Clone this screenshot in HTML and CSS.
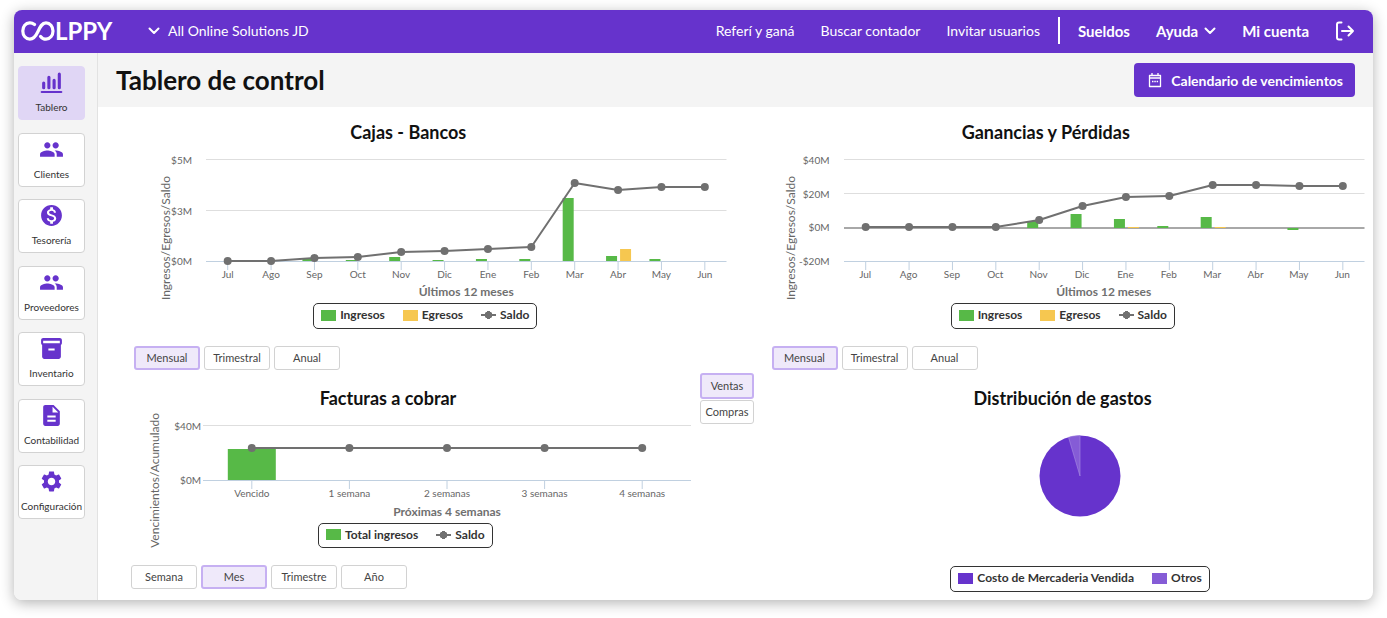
FILE: index.html
```html
<!DOCTYPE html>
<html lang="es">
<head>
<meta charset="utf-8">
<meta name="viewport" content="width=device-width, initial-scale=1">
<title>Tablero de control</title>
<link rel="stylesheet" href="styles.css">
</head>
<body>
<div class="app">
  <header class="topbar">
    <a class="logo" href="#" aria-label="Colppy">
      <svg width="34" height="20" viewBox="0 0 34 20" fill="none" stroke="#fff" stroke-width="3.2" stroke-linecap="round">
        <path d="M13.5 3.6C11.8 2.2 10 1.7 8.6 1.8C4.6 2 1.8 5.600 1.800 10C1.800 14.600 4.800 18.200 8.800 18.200C12.600 18.200 14.800 15.200 17 10.500C19.200 5.600 21 1.800 25 1.800C29 1.800 32 5.400 32 10C32 14.600 29 18.200 25 18.200C22.600 18.200 21 17.200 19.600 15.400"/>
      </svg>
      <span class="logo-text">LPPY</span>
    </a>
    <button class="company" type="button">
      <svg class="chevron" viewBox="0 0 12 8"><path d="M1.500 1.500L6 6L10.500 1.500"/></svg>
      All Online Solutions JD
    </button>
    <nav class="topnav">
      <a href="#">Referí y ganá</a>
      <a href="#">Buscar contador</a>
      <a href="#">Invitar usuarios</a>
    </nav>
    <nav class="account">
      <a href="#">Sueldos</a>
      <button type="button">Ayuda <svg class="chevron" viewBox="0 0 12 8"><path d="M1.500 1.500L6 6L10.500 1.500"/></svg></button>
      <a href="#">Mi cuenta</a>
      <button type="button" aria-label="Salir"><svg class="logout" viewBox="0 0 20 20"><path d="M6.500 1.500H4Q2 1.500 2 3.500V16.500Q2 18.500 4 18.500H6.500M7 10H18M13.500 5.500L18 10L13.500 14.500"/></svg></button>
    </nav>
  </header>
  <div class="body">
    <aside class="sidebar">
      <nav class="side-nav">
        <a class="side-item is-active" href="#"><svg viewBox="0 0 24 24"><path d="M2.500 20.200h19a.9.9 0 0 1 0 1.800h-19a.9.9 0 0 1 0-1.800z"/><path d="M4.500 12.500v4.500M9.500 7v10M14.500 10v7M19.500 4v13" class="bars"/></svg>Tablero</a>
        <a class="side-item" href="#"><svg viewBox="0 0 24 24"><path d="M16 11c1.660 0 2.990-1.340 2.990-3S17.660 5 16 5s-3 1.340-3 3 1.340 3 3 3zm-8 0c1.660 0 2.990-1.340 2.990-3S9.660 5 8 5 5 6.340 5 8s1.340 3 3 3zm0 2c-2.330 0-7 1.170-7 3.500V19h14v-2.500c0-2.330-4.670-3.500-7-3.500zm8 0c-.29 0-.62.020-.97.050 1.160.840 1.970 1.970 1.970 3.450V19h6v-2.500c0-2.330-4.670-3.500-7-3.500z"/></svg>Clientes</a>
        <a class="side-item" href="#"><svg viewBox="0 0 24 24"><path d="M12 2C6.480 2 2 6.480 2 12s4.480 10 10 10 10-4.480 10-10S17.520 2 12 2zm1.410 16.090V20h-2.670v-1.930c-1.710-.360-3.160-1.460-3.270-3.400h1.960c.1 1.050.820 1.870 2.650 1.870 1.960 0 2.400-.980 2.400-1.590 0-.830-.440-1.610-2.670-2.140-2.480-.6-4.180-1.620-4.180-3.670 0-1.720 1.390-2.840 3.110-3.210V4h2.670v1.950c1.860.450 2.790 1.860 2.850 3.390H14.300c-.050-1.110-.640-1.870-2.220-1.870-1.500 0-2.400.680-2.400 1.640 0 .840.650 1.390 2.670 1.910s4.180 1.390 4.180 3.910c-.010 1.830-1.380 2.830-3.120 3.160z"/></svg>Tesorería</a>
        <a class="side-item" href="#"><svg viewBox="0 0 24 24"><path d="M16 11c1.660 0 2.990-1.340 2.990-3S17.660 5 16 5s-3 1.340-3 3 1.340 3 3 3zm-8 0c1.660 0 2.990-1.340 2.990-3S9.660 5 8 5 5 6.340 5 8s1.340 3 3 3zm0 2c-2.330 0-7 1.170-7 3.500V19h14v-2.500c0-2.330-4.670-3.500-7-3.500zm8 0c-.29 0-.62.020-.97.050 1.160.840 1.970 1.970 1.970 3.450V19h6v-2.500c0-2.330-4.670-3.500-7-3.500z"/></svg>Proveedores</a>
        <a class="side-item" href="#"><svg viewBox="0 0 24 24"><path fill-rule="evenodd" d="M20 2H4c-1 0-2 .9-2 2v3.010c0 .720.430 1.340 1 1.690V20c0 1.100 1.100 2 2 2h14c.9 0 2-.9 2-2V8.700c.570-.350 1-.970 1-1.690V4c0-1.100-1-2-2-2zM15 14H9v-2h6v2zM20 7H4V4.500h16V7z"/></svg>Inventario</a>
        <a class="side-item" href="#"><svg viewBox="0 0 24 24"><path d="M14 2H6c-1.100 0-1.990.9-1.990 2L4 20c0 1.100.890 2 1.990 2H18c1.100 0 2-.9 2-2V8l-6-6zm2 16H8v-2h8v2zm0-4H8v-2h8v2zm-3-5V3.500L18.500 9H13z"/></svg>Contabilidad</a>
        <a class="side-item" href="#"><svg viewBox="0 0 24 24"><path d="M19.140 12.940c.040-.3.060-.610.060-.940 0-.320-.020-.640-.070-.940l2.030-1.580c.180-.140.230-.410.120-.610l-1.920-3.320c-.120-.220-.370-.290-.590-.220l-2.390.960c-.5-.380-1.030-.7-1.620-.940l-.360-2.540c-.040-.240-.240-.410-.480-.410h-3.840c-.240 0-.430.170-.470.410l-.360 2.540c-.590.240-1.130.570-1.620.940l-2.390-.960c-.220-.080-.470 0-.590.220L2.740 8.870c-.120.210-.080.470.120.610l2.030 1.580c-.050.3-.090.630-.090.940s.020.640.070.940l-2.030 1.580c-.180.140-.230.410-.120.610l1.920 3.320c.120.220.370.290.590.220l2.390-.960c.5.380 1.030.7 1.620.940l.360 2.540c.050.240.240.410.480.410h3.840c.240 0 .440-.170.470-.410l.360-2.540c.590-.240 1.130-.560 1.620-.940l2.390.960c.220.080.470 0 .590-.220l1.920-3.320c.120-.220.070-.470-.120-.610l-2.010-1.580zM12 15.600c-1.980 0-3.600-1.620-3.600-3.600s1.620-3.600 3.600-3.600 3.600 1.620 3.600 3.600-1.620 3.600-3.600 3.600z"/></svg>Configuración</a>
      </nav>
    </aside>
    <main class="main">
      <div class="page-head">
        <h1>Tablero de control</h1>
        <button class="primary" type="button">
          <svg viewBox="0 0 16 16"><path d="M2.500 3.500h11v11h-11zM2.500 6h11M5 1v2.500M11 1v2.500" /><path class="dots" d="M5 9.500h1.500M7.300 9.500h1.500M9.600 9.500h1.500"/></svg>
          Calendario de vencimientos
        </button>
      </div>

      <div class="row row-top">
        <section class="panel cash">
          <h2>Cajas - Bancos</h2>
          <div class="chart">
            <div class="y-title">Ingresos/Egresos/Saldo</div>
            <div class="y-labels"><span>$5M</span><span>$3M</span><span>$0M</span></div>
            <svg class="plot" data-chart="cajas"></svg>
            <div class="x-labels"><span>Jul</span><span>Ago</span><span>Sep</span><span>Oct</span><span>Nov</span><span>Dic</span><span>Ene</span><span>Feb</span><span>Mar</span><span>Abr</span><span>May</span><span>Jun</span></div>
            <div class="x-title">Últimos 12 meses</div>
          </div>
          <div class="legend">
            <span class="key"><i class="swatch green"></i>Ingresos</span>
            <span class="key"><i class="swatch yellow"></i>Egresos</span>
            <span class="key"><i class="marker"></i>Saldo</span>
          </div>
          <div class="ranges">
            <button class="is-active" type="button">Mensual</button><button type="button">Trimestral</button><button type="button">Anual</button>
          </div>
        </section>
        <section class="panel">
          <h2>Ganancias y Pérdidas</h2>
          <div class="chart">
            <div class="y-title">Ingresos/Egresos/Saldo</div>
            <div class="y-labels"><span>$40M</span><span>$20M</span><span>$0M</span><span>-$20M</span></div>
            <svg class="plot" data-chart="ganancias"></svg>
            <div class="x-labels"><span>Jul</span><span>Ago</span><span>Sep</span><span>Oct</span><span>Nov</span><span>Dic</span><span>Ene</span><span>Feb</span><span>Mar</span><span>Abr</span><span>May</span><span>Jun</span></div>
            <div class="x-title">Últimos 12 meses</div>
          </div>
          <div class="legend">
            <span class="key"><i class="swatch green"></i>Ingresos</span>
            <span class="key"><i class="swatch yellow"></i>Egresos</span>
            <span class="key"><i class="marker"></i>Saldo</span>
          </div>
          <div class="ranges">
            <button class="is-active" type="button">Mensual</button><button type="button">Trimestral</button><button type="button">Anual</button>
          </div>
        </section>
      </div>

      <div class="row row-bottom">
        <section class="panel invoices">
          <h2>Facturas a cobrar</h2>
          <div class="chart">
            <div class="y-title">Vencimientos/Acumulado</div>
            <div class="y-labels"><span>$40M</span><span>$0M</span></div>
            <svg class="plot" data-chart="facturas"></svg>
            <div class="x-labels"><span>Vencido</span><span>1 semana</span><span>2 semanas</span><span>3 semanas</span><span>4 semanas</span></div>
            <div class="x-title">Próximas 4 semanas</div>
            <div class="legend">
              <span class="key"><i class="swatch green"></i>Total ingresos</span>
              <span class="key"><i class="marker"></i>Saldo</span>
            </div>
          </div>
          <div class="ranges">
            <button type="button">Semana</button><button class="is-active" type="button">Mes</button><button type="button">Trimestre</button><button type="button">Año</button>
          </div>
        </section>
        <div class="switch">
          <button class="is-active" type="button">Ventas</button>
          <button type="button">Compras</button>
        </div>
        <section class="panel expenses">
          <h2>Distribución de gastos</h2>
          <svg class="pie" viewBox="0 0 82 82">
            <circle cx="41" cy="41" r="40.500" fill="#6633cc"/>
            <path d="M41 41L29.500 2.200A40.500 40.500 0 0 1 41 .5Z" fill="#855cd6" stroke="#a98ee2" stroke-width=".6"/>
          </svg>
          <div class="legend">
            <span class="key"><i class="swatch purple"></i>Costo de Mercaderia Vendida</span>
            <span class="key"><i class="swatch violet"></i>Otros</span>
          </div>
        </section>
      </div>
    </main>
  </div>
</div>
<script src="charts.js"></script>
</body>
</html>
```

FILE: styles.css
```css
* { box-sizing: border-box; }

body {
  margin: 0;
  padding: 10px 14px 18px;
  background: #fff;
  color: #111;
  font-family: Lato, "Open Sans", sans-serif;
}

a { color: inherit; text-decoration: none; }
button { font: inherit; color: inherit; border: 0; background: none; padding: 0; cursor: pointer; }
h1, h2 { margin: 0; }

.app {
  border-radius: 8px;
  overflow: hidden;
  background: #fff;
  box-shadow: 0 3px 14px rgba(0, 0, 0, .3);
}

/* Top bar */
.topbar {
  display: flex;
  align-items: center;
  height: 43px;
  padding: 0 18px 2px 7px;
  background: #6633cc;
  color: #fff;
  font-size: 14px;
}
.logo { display: flex; align-items: center; width: 127px; }
.logo-text { font-size: 24px; line-height: 20px; font-weight: 700; }
.company { display: flex; align-items: center; gap: 8px; }
.chevron { width: 12px; height: 8px; fill: none; stroke: #fff; stroke-width: 2; stroke-linecap: round; stroke-linejoin: round; }
.topnav { display: flex; gap: 26px; margin-left: auto; padding-right: 18px; }
.account {
  display: flex;
  align-items: center;
  height: 27px;
  gap: 26px;
  padding-left: 18px;
  border-left: 2px solid #fff;
  font-size: 15px;
  font-weight: 700;
}
.account button { display: flex; align-items: center; gap: 6px; }
.logout { width: 20px; height: 20px; fill: none; stroke: #fff; stroke-width: 2; stroke-linecap: round; stroke-linejoin: round; }

.body { display: flex; }

/* Sidebar */
.sidebar {
  flex: none;
  width: 84px;
  padding: 13px 4px;
  background: #f4f4f4;
  border-right: 1px solid #e2e2e2;
}
.side-nav { display: flex; flex-direction: column; justify-content: space-between; width: 67px; height: 453px; }
.side-item {
  display: flex;
  flex-direction: column;
  align-items: center;
  gap: 5px;
  height: 54px;
  padding-top: 3px;
  border: 1px solid #d2d2d2;
  border-radius: 4px;
  background: #fff;
  color: #333;
  font-size: 10px;
  line-height: 14px;
}
.side-item svg { width: 25px; height: 25px; fill: #6633cc; }
.side-item .bars { stroke: #6633cc; stroke-width: 3; stroke-linecap: round; }
.side-item.is-active { background: #e0d6f5; border-color: #e0d6f5; }

/* Page heading */
.main { flex: 1; min-width: 0; }
.page-head {
  display: flex;
  align-items: center;
  justify-content: space-between;
  height: 54px;
  padding: 0 18px;
  background: #f4f4f4;
}
h1 { font-size: 26px; line-height: 30px; font-weight: 700; }
.primary {
  display: flex;
  align-items: center;
  gap: 8px;
  height: 34px;
  padding: 0 12px 0 13px;
  border-radius: 4px;
  background: #6633cc;
  color: #fff;
  font-size: 14px;
  font-weight: 700;
}
.primary svg { width: 16px; height: 16px; fill: none; stroke: #fff; stroke-width: 1.300; stroke-linejoin: round; }

/* Chart panels */
.row { display: flex; }
.panel { display: flex; flex-direction: column; }
.row .panel { flex: 1; min-width: 0; }
h2 { padding-right: 17px; font-size: 18px; line-height: 22px; font-weight: 700; text-align: center; }
.row-top .panel { padding-top: 14px; }
.chart {
  display: grid;
  grid-template: 101px 23px 16px / 38px 34px 1fr;
  margin: 17px 9px 0 36px;
}
.cash .chart { grid-template-columns: 64px 8px 1fr; }
.y-title {
  grid-area: 1 / 1 / -1 / 2;
  place-self: end center;
  writing-mode: vertical-rl;
  transform: rotate(180deg);
  white-space: nowrap;
  color: #666;
  font-size: 12px;
  line-height: 14px;
}
.y-labels {
  grid-area: 1 / 2;
  display: flex;
  flex-direction: column;
  justify-content: space-between;
  margin: -6px 14px -6px -40px;
  text-align: right;
}
.y-labels, .x-labels { color: #666; font-size: 10px; line-height: 12px; }
.plot { grid-area: 1 / 3; width: 100%; height: 110px; }
.x-labels { grid-area: 2 / 3; display: flex; padding-top: 7px; }
.x-labels span { flex: 1; text-align: center; white-space: nowrap; }
.x-title { grid-area: 3 / 3; text-align: center; color: #707070; font-size: 12px; line-height: 16px; font-weight: 700; }

.legend {
  display: flex;
  align-self: center;
  align-items: center;
  gap: 18px;
  width: fit-content;
  height: 26px;
  margin: 3px 0 0 17px;
  padding: 0 7px 2px;
  border: 1px solid #333;
  border-radius: 5px;
  color: #333;
  font-size: 12px;
  line-height: 14px;
  font-weight: 700;
}
.key { display: flex; align-items: center; gap: 4px; white-space: nowrap; }
.swatch { width: 15px; height: 11px; }
.green { background: #57b947; }
.yellow { background: #f6c750; }
.purple { background: #6633cc; }
.violet { background: #855cd6; }
.marker { width: 15px; height: 8px; background: radial-gradient(circle closest-side, #707070 95%, transparent), linear-gradient(#707070, #707070) center / 100% 2px no-repeat; }

.ranges { display: flex; gap: 4px; margin: 17px 0 0 36px; }
.ranges button, .switch button {
  width: 66px;
  height: 24px;
  padding-bottom: 2px;
  border: 1px solid #d2d2d2;
  border-radius: 3px;
  background: #fff;
  color: #444;
  font-size: 11px;
}
.ranges .is-active, .switch .is-active { background: #efe9fa; border: 2px solid #c6b0f2; }

/* Lower row */
.row .invoices { flex: 602 1 0; padding-top: 17px; }
.invoices h2 { padding-right: 22px; }
.invoices .chart { grid-template: 54px 24px 19px 25px / 48px 24px 1fr; margin: 17px 9px 0 33px; }
.invoices .y-labels { margin-right: 2px; }
.invoices .plot { height: 64px; }
.invoices .legend { grid-area: 4 / 1 / 5 / 4; height: 25px; margin: 0 0 0 187px; }
.invoices .ranges { margin: 17px 0 11px 33px; }
.switch { display: flex; flex-direction: column; gap: 1px; width: 54px; padding-top: 3px; }
.switch button { width: 54px; }
.switch .is-active { height: 26px; }
.row .expenses { flex: 619 1 0; padding: 17px 0 8px; }
.expenses h2 { padding-right: 2px; }
.pie { align-self: center; width: 82px; height: 82px; margin: 26px 0 0 33px; }
.expenses .legend { margin: auto 0 0 33px; }
```

FILE: charts.js
```js
const NS = 'http://www.w3.org/2000/svg';
const GREEN = '#57b947', YELLOW = '#f6c750', GRAY = '#707070', AXIS = '#c0d0e0';

// Heights are distances from the top of the plot; bars grow from `zero`.
const charts = {
  cajas: {
    height: 101, zero: 101, grid: [-1, 50], barWidth: 11, barOffset: -12,
    line: [101, 101, 98, 97, 92, 91, 89, 87, 23, 30, 27, 27],
    income: [0, 0, 2, 1, 4, 1, 2, 2, 63, 5, 2, 0],
    expense: [0, 0, 0, 0, 0, 0, 0, 0, 0, 12, 0, 0]
  },
  ganancias: {
    height: 101, zero: 68, grid: [-1, 33], zeroLine: true, barWidth: 11, barOffset: -12,
    line: [67, 67, 67, 67, 60, 46, 37, 36, 25, 25, 26, 26],
    income: [0, 0, 1, 1, 7, 14, 9, 2, 11, 0, -2, 0],
    expense: [0, 0, 0, 0, 0, 0, 1, 0, 1, 0, 0, 0]
  },
  facturas: {
    height: 54, zero: 54, grid: [-1], barWidth: 48, barOffset: -24,
    line: [22, 22, 22, 22, 22],
    income: [31, 0, 0, 0, 0],
    expense: []
  }
};

function add(parent, tag, attrs) {
  const el = document.createElementNS(NS, tag);
  for (const key in attrs) el.setAttribute(key, attrs[key]);
  parent.appendChild(el);
  return el;
}

function hline(svg, y, color, thickness = 1) {
  add(svg, 'rect', { x: 0, y: y, width: '100%', height: thickness, fill: color });
}

function bars(svg, c, values, offset, color) {
  values.forEach((v, i) => {
    if (!v) return;
    const slot = add(svg, 'svg', { x: (i + 0.5) * 100 / c.line.length + '%', y: 0, overflow: 'visible' });
    add(slot, 'rect', { x: offset, y: v > 0 ? c.zero - v : c.zero, width: c.barWidth, height: Math.abs(v), fill: color });
  });
}

document.querySelectorAll('[data-chart]').forEach(svg => {
  const c = charts[svg.dataset.chart];
  const n = c.line.length;
  const x = i => (i + 0.5) * 100 / n + '%';
  svg.style.overflow = 'visible';
  c.grid.forEach(y => hline(svg, y, '#dedede'));
  hline(svg, c.height, AXIS);
  c.line.forEach((v, i) => add(svg, 'line', { x1: x(i), x2: x(i), y1: c.height, y2: c.height + 9, stroke: AXIS }));
  if (c.zeroLine) hline(svg, c.zero - 1, '#a8a8a8', 2);
  bars(svg, c, c.income, c.barOffset, GREEN);
  bars(svg, c, c.expense, 2, YELLOW);
  for (let i = 1; i < n; i++) {
    add(svg, 'line', { x1: x(i - 1), y1: c.line[i - 1], x2: x(i), y2: c.line[i], stroke: GRAY, 'stroke-width': 2, 'stroke-linecap': 'round' });
  }
  c.line.forEach((v, i) => add(svg, 'circle', { cx: x(i), cy: v, r: 4, fill: GRAY }));
});
```
